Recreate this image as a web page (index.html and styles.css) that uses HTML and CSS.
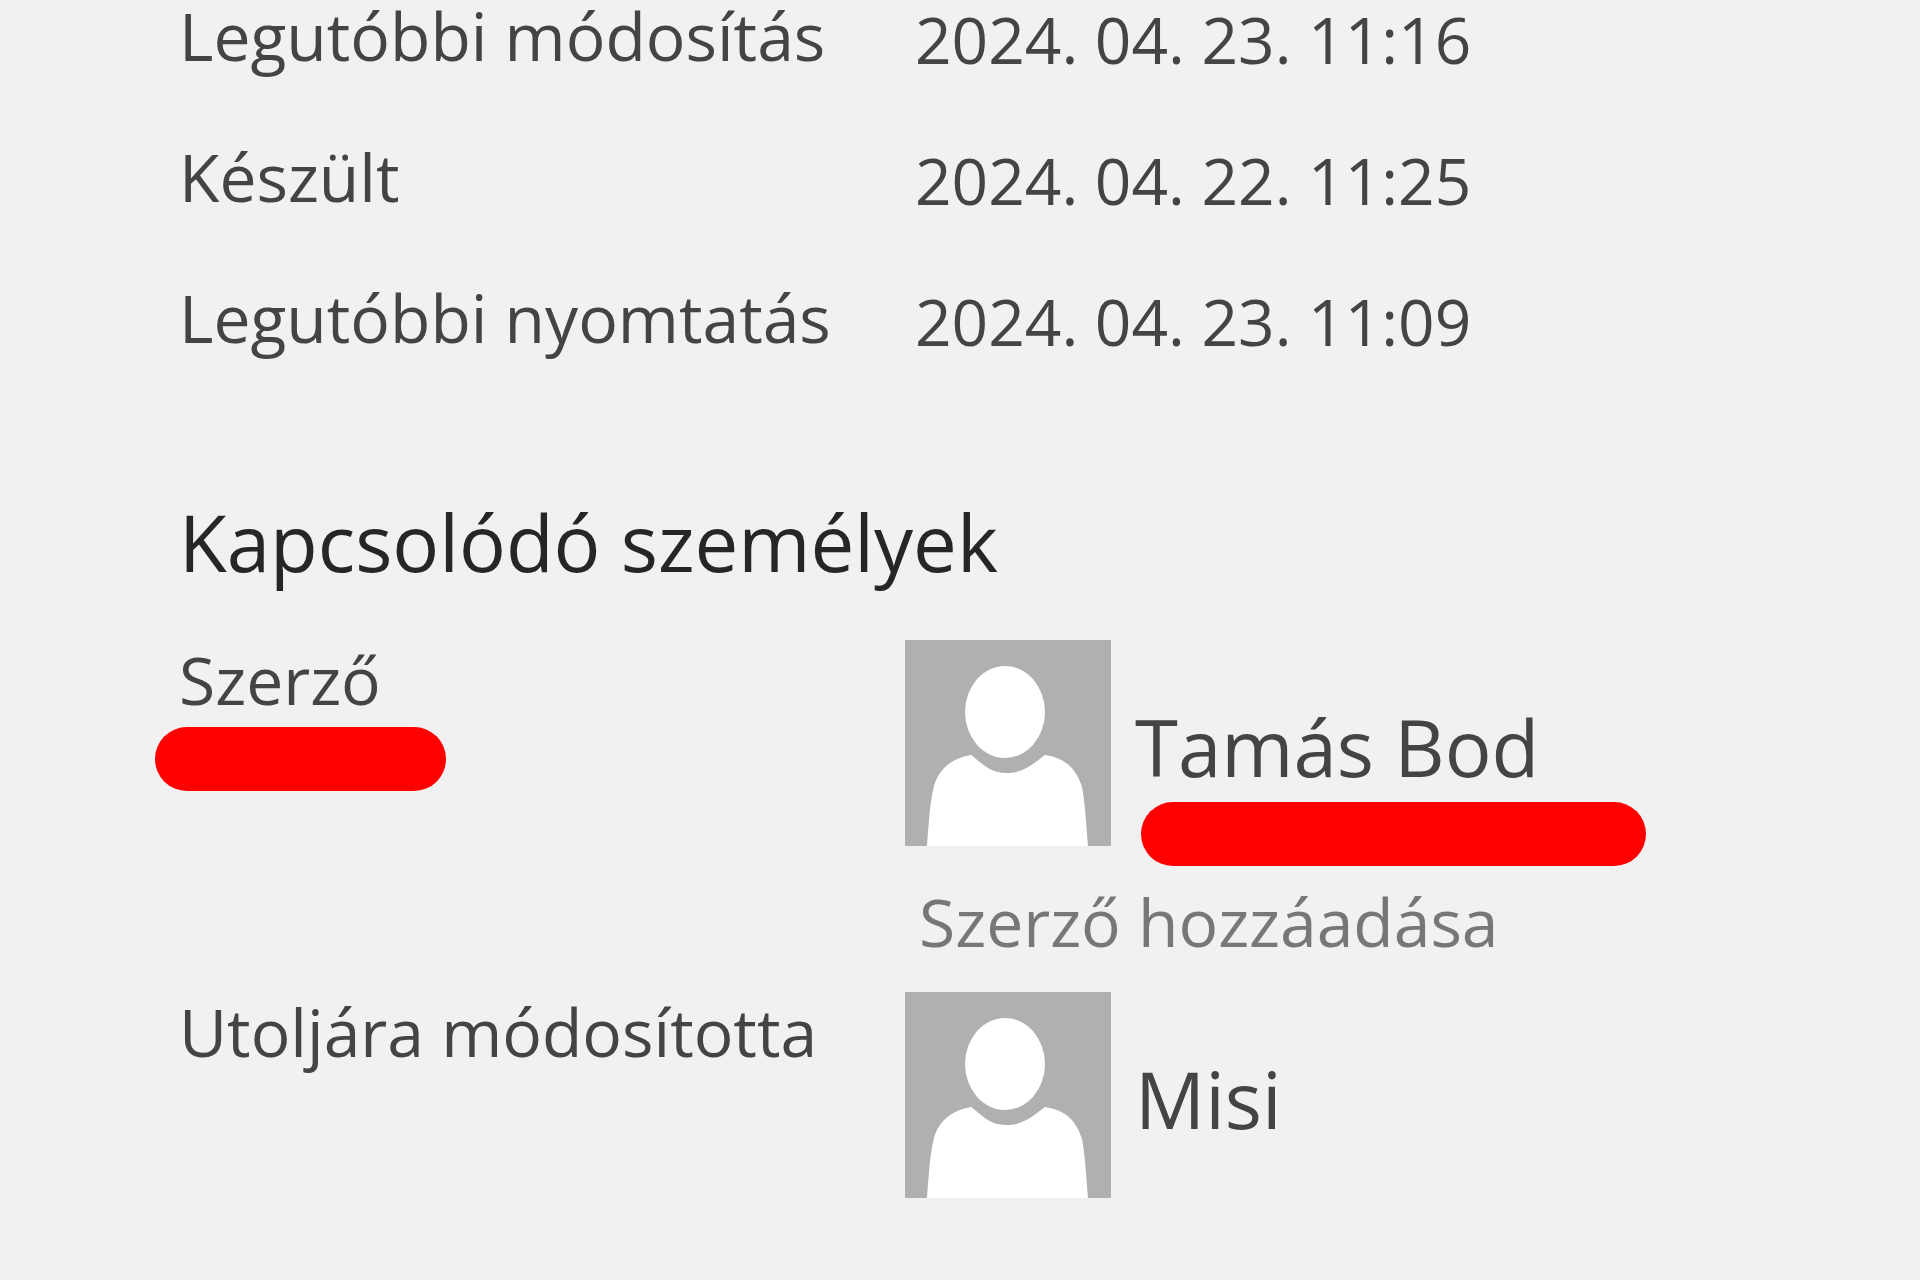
FILE: index.html
```html
<!DOCTYPE html>
<html lang="hu">
<head>
<meta charset="utf-8">
<meta name="viewport" content="width=device-width, initial-scale=1">
<title>Dokumentum adatai</title>
<link rel="stylesheet" href="styles.css">
</head>
<body>
<svg class="symbols" aria-hidden="true">
  <symbol id="person" viewBox="0 0 206 206">
    <rect width="206" height="206" fill="#b0b0b0"/>
    <ellipse cx="100" cy="72" rx="40" ry="46" fill="#fff"/>
    <path d="M22 206C24 180 25 162 29 146C34 128 48 118 66 115C76 122 84 133 101 133C120 133 130 122 140 115C160 118 171 128 177 147C180 163 181 182 183 206Z" fill="#fff"/>
  </symbol>
</svg>
<main class="info">
  <dl class="grid">
    <dt class="label">Legutóbbi módosítás</dt>
    <dd class="date">2024. 04. 23. 11:16</dd>
    <dt class="label">Készült</dt>
    <dd class="date">2024. 04. 22. 11:25</dd>
    <dt class="label">Legutóbbi nyomtatás</dt>
    <dd class="date">2024. 04. 23. 11:09</dd>
  </dl>
  <h2 class="heading">Kapcsolódó személyek</h2>
  <dl class="grid people">
    <dt class="label">Szerző<span class="bar bar-label"></span></dt>
    <dd class="value">
      <div class="person">
        <svg class="avatar" aria-hidden="true"><use href="#person"/></svg>
        <div class="name">Tamás Bod<span class="bar bar-name"></span></div>
      </div>
      <button class="add" type="button">Szerző hozzáadása</button>
    </dd>
    <dt class="label">Utoljára módosította</dt>
    <dd class="value">
      <div class="person">
        <svg class="avatar" aria-hidden="true"><use href="#person"/></svg>
        <div class="name">Misi</div>
      </div>
    </dd>
  </dl>
</main>
</body>
</html>
```
FILE: styles.css
```css
* { box-sizing: border-box; }
body {
  margin: 0;
  background: #f1f1f1;
  color: #444;
  font: 66px/70px "Open Sans", "Noto Sans", sans-serif;
}
.symbols { position: absolute; width: 0; height: 0; }
.info { padding: 0 0 72px 179px; }
.grid {
  display: grid;
  grid-template-columns: 726px 1fr;
  row-gap: 66px;
  margin: 0;
  white-space: nowrap;
}
.people { row-gap: 36px; }
.grid dd { margin: 0; }
.date { padding: 5px 0 0 10px; font-size: 64px; }
.heading {
  margin: 140px 0 53px;
  color: #262626;
  font-size: 78px;
  line-height: 90px;
  font-weight: 400;
}
.people .label { padding-top: 4px; }
.bar { display: block; height: 64px; border-radius: 32px; background: #f00; }
.bar-label { width: 291px; margin: 13px 0 0 -24px; }
.bar-name { width: 505px; margin: 10px 0 0 6px; }
.person { display: flex; gap: 24px; }
.avatar { flex: none; width: 206px; height: 206px; }
.name { padding-top: 62px; font-size: 78px; line-height: 90px; }
.add {
  display: block;
  margin-top: 20px;
  padding: 0 0 0 14px;
  border: 0;
  background: none;
  color: #777;
  font: inherit;
}
```
